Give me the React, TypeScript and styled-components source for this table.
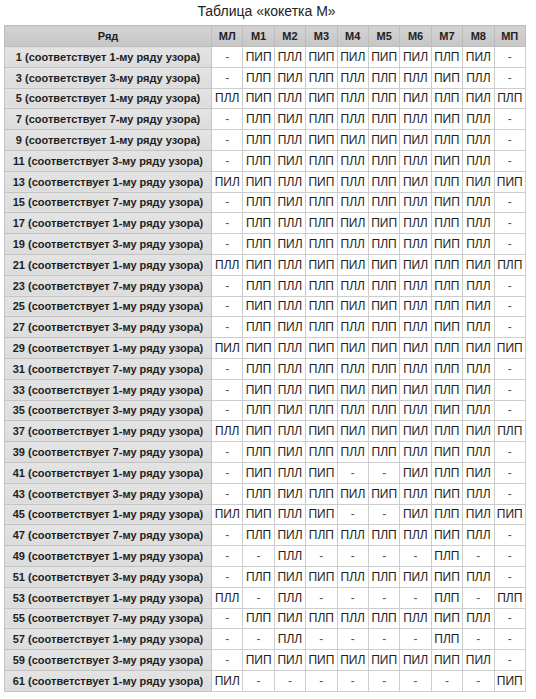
import React from "react";
import styled, { createGlobalStyle } from "styled-components";

const Global = createGlobalStyle`
  html, body { margin: 0; padding: 0; background: #ffffff; }
  body { font-family: "Liberation Sans", Arial, sans-serif; color: #1e1e1e; }
`;

const Page = styled.div`
  padding: 0 11px 0 4px;
  display: flex;
  flex-direction: column;
`;

const Title = styled.div`
  height: 25px;
  display: flex;
  align-items: center;
  justify-content: center;
  font-size: 14px;
  color: #222;
  padding-bottom: 4px;
  box-sizing: border-box;
  padding-left: 4px;
`;

const Table = styled.table`
  width: 521px;
  border-collapse: collapse;
  table-layout: fixed;
  border: 1px solid #b8b8b8;
`;

const HeadCell = styled.th`
  height: 20px;
  padding: 0;
  font-size: 11px;
  font-weight: bold;
  color: #222;
  text-align: center;
  border: 1px solid #bdbdbd;
  background: linear-gradient(#d3d3d3, #c6c6c6);
`;

const Row = styled.tr`
  height: 20.8px;
`;

const LabelCell = styled.td`
  padding: 0;
  font-size: 11px;
  font-weight: bold;
  color: #1e1e1e;
  text-align: center;
  white-space: nowrap;
  border: 1px solid #c4c4c4;
  background: linear-gradient(#e4e4e4, #dcdcdc);
`;

const Cell = styled.td<{ $dash?: boolean }>`
  padding: 0;
  font-size: 12px;
  color: ${(p) => (p.$dash ? "#555" : "#1e1e1e")};
  text-align: center;
  white-space: nowrap;
  border: 1px solid #cdcdcd;
  background: #fff;
`;

const cols = ["МЛ", "М1", "М2", "М3", "М4", "М5", "М6", "М7", "М8", "МП"];

const raw: [number, number, string][] = [
  [1, 1, "- ПИП ПЛЛ ПИП ПИЛ ПИП ПИЛ ПЛП ПИЛ -"],
  [3, 3, "- ПЛП ПИЛ ПЛП ПЛЛ ПЛП ПЛЛ ПИП ПЛЛ -"],
  [5, 1, "ПЛЛ ПИП ПЛЛ ПИП ПЛЛ ПЛП ПИЛ ПЛП ПИЛ ПЛП"],
  [7, 7, "- ПЛП ПИЛ ПЛП ПЛЛ ПЛП ПЛЛ ПИП ПЛЛ -"],
  [9, 1, "- ПЛП ПЛЛ ПИП ПИЛ ПИП ПИЛ ПЛП ПЛЛ -"],
  [11, 3, "- ПЛП ПИЛ ПЛП ПЛЛ ПЛП ПЛЛ ПИП ПЛЛ -"],
  [13, 1, "ПИЛ ПИП ПЛЛ ПИП ПЛЛ ПЛП ПИЛ ПЛП ПИЛ ПИП"],
  [15, 7, "- ПЛП ПИЛ ПЛП ПЛЛ ПЛП ПЛЛ ПИП ПЛЛ -"],
  [17, 1, "- ПЛП ПЛЛ ПЛП ПИЛ ПИП ПЛЛ ПЛП ПЛЛ -"],
  [19, 3, "- ПЛП ПИЛ ПЛП ПЛЛ ПЛП ПЛЛ ПИП ПЛЛ -"],
  [21, 1, "ПЛЛ ПИП ПЛЛ ПИП ПИЛ ПИП ПИЛ ПЛП ПИЛ ПЛП"],
  [23, 7, "- ПЛП ПЛЛ ПЛП ПЛЛ ПЛП ПЛЛ ПЛП ПЛЛ -"],
  [25, 1, "- ПИП ПЛЛ ПЛП ПИЛ ПИП ПЛЛ ПЛП ПИЛ -"],
  [27, 3, "- ПЛП ПИЛ ПЛП ПЛЛ ПЛП ПЛЛ ПИП ПЛЛ -"],
  [29, 1, "ПИЛ ПИП ПЛЛ ПИП ПИЛ ПИП ПИЛ ПЛП ПИЛ ПИП"],
  [31, 7, "- ПЛП ПЛЛ ПЛП ПЛЛ ПЛП ПЛЛ ПЛП ПЛЛ -"],
  [33, 1, "- ПИП ПЛЛ ПИП ПИЛ ПИП ПИЛ ПЛП ПИЛ -"],
  [35, 3, "- ПЛП ПИЛ ПЛП ПЛЛ ПЛП ПЛЛ ПИП ПЛЛ -"],
  [37, 1, "ПЛЛ ПИП ПЛЛ ПИП ПИЛ ПИП ПИЛ ПЛП ПИЛ ПЛП"],
  [39, 7, "- ПЛП ПИЛ ПЛП ПЛЛ ПЛП ПЛЛ ПИП ПЛЛ -"],
  [41, 1, "- ПИП ПЛЛ ПИП - - ПИЛ ПЛП ПИЛ -"],
  [43, 3, "- ПЛП ПИЛ ПЛП ПИЛ ПИП ПЛЛ ПИП ПЛЛ -"],
  [45, 1, "ПИЛ ПИП ПЛЛ ПИП - - ПИЛ ПЛП ПИЛ ПИП"],
  [47, 7, "- ПЛП ПИЛ ПЛП ПЛЛ ПЛП ПЛЛ ПИП ПЛЛ -"],
  [49, 1, "- - ПЛЛ - - - - ПЛП - -"],
  [51, 3, "- ПЛП ПИЛ ПИП ПЛЛ ПЛП ПИЛ ПИП ПЛЛ -"],
  [53, 1, "ПЛЛ - ПЛЛ - - - - ПЛП - ПЛП"],
  [55, 7, "- ПЛП ПИЛ ПЛП ПЛЛ ПЛП ПЛЛ ПИП ПЛЛ -"],
  [57, 1, "- - ПЛЛ - - - - ПЛП - -"],
  [59, 3, "- ПИП ПИЛ ПИП ПИЛ ПИП ПИЛ ПИП ПИЛ -"],
  [61, 1, "ПИЛ - - - - - - - - ПИП"],
];

export default function App() {
  return (
    <Page>
      <Global />
      <Title>Таблица «кокетка М»</Title>
      <Table>
        <colgroup>
          <col style={{ width: 207 }} />
          {cols.map((c) => (
            <col key={c} style={{ width: 31.4 }} />
          ))}
        </colgroup>
        <thead>
          <tr>
            <HeadCell>Ряд</HeadCell>
            {cols.map((c) => (
              <HeadCell key={c}>{c}</HeadCell>
            ))}
          </tr>
        </thead>
        <tbody>
          {raw.map(([n, p, vals]) => (
            <Row key={n}>
              <LabelCell>
                {n} (соответствует {p}-му ряду узора)
              </LabelCell>
              {vals.split(" ").map((v, i) => (
                <Cell key={i} $dash={v === "-"}>
                  {v}
                </Cell>
              ))}
            </Row>
          ))}
        </tbody>
      </Table>
    </Page>
  );
}
